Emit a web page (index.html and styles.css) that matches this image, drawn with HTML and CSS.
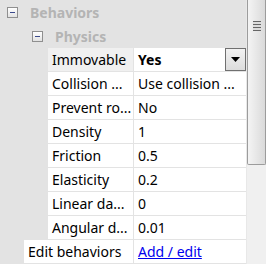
FILE: index.html
```html
<!DOCTYPE html>
<html lang="en">
<head>
  <meta charset="UTF-8" />
  <title>Properties</title>
  <link rel="stylesheet" href="styles.css">
</head>
<body>
  <div class="panel">
    <div class="grid">
      <div class="group">
        <span class="expander"></span>
        <span class="group-title">Behaviors</span>
      </div>
      <div class="group sub">
        <span class="expander"></span>
        <span class="group-title">Physics</span>
      </div>

      <div class="props">
        <div class="name selected">Immovable</div>
        <div class="value combo">
          <b>Yes</b>
          <span class="drop"><svg width="9" height="5" viewBox="0 0 9 5"><path d="M0 0h9L4.5 5z" fill="#000"/></svg></span>
        </div>
        <div class="name">Collision ...</div>
        <div class="value">Use collision ...</div>
        <div class="name">Prevent ro...</div>
        <div class="value">No</div>
        <div class="name">Density</div>
        <div class="value">1</div>
        <div class="name">Friction</div>
        <div class="value">0.5</div>
        <div class="name">Elasticity</div>
        <div class="value">0.2</div>
        <div class="name">Linear da...</div>
        <div class="value">0</div>
        <div class="name">Angular d...</div>
        <div class="value">0.01</div>
      </div>

      <div class="props edit">
        <div class="name">Edit behaviors</div>
        <div class="value"><a href="#">Add / edit</a></div>
      </div>
    </div>

    <div class="scrollbar">
      <div class="thumb">
        <span class="grip"></span>
      </div>
    </div>
  </div>
</body>
</html>
```

FILE: styles.css
```css
body {
  margin: 0;
  font-family: 'Noto Sans', 'Open Sans', sans-serif;
  font-size: 14px;
  background-color: #e3e3e3;
  color: #000;
}

.panel {
  display: flex;
  height: 264px;
  overflow: hidden;
}

.grid {
  width: 247px;
}

.group {
  display: flex;
  align-items: center;
  height: 24px;
  padding-left: 7px;
  gap: 12px;
}

.group.sub {
  padding-left: 32px;
}

.group-title {
  font-weight: bold;
  color: #b4b4b4;
}

.expander {
  position: relative;
  width: 9px;
  height: 9px;
  border: 1px solid #8f8f8f;
  background: linear-gradient(#ffffff, #e2e2e2);
}

.expander::after {
  content: "";
  position: absolute;
  left: 2px;
  top: 4px;
  width: 5px;
  height: 1px;
  background-color: #3b4a8c;
}

.props {
  display: grid;
  grid-template-columns: 85px 112px;
  gap: 1px;
  margin-left: 48px;
}

.props.edit {
  grid-template-columns: 109px 112px;
  margin-left: 24px;
  margin-top: 1px;
}

.name,
.value {
  height: 23px;
  line-height: 23px;
  padding-left: 4px;
  background-color: #fff;
  white-space: nowrap;
  overflow: hidden;
}

.name.selected {
  background-color: #f0f0f0;
}

.combo {
  display: flex;
  justify-content: space-between;
}

.drop {
  display: flex;
  align-items: center;
  justify-content: center;
  width: 19px;
  height: 21px;
  border: 1px solid #707070;
  background: linear-gradient(#f2f2f2, #dcdcdc);
}

a {
  color: #0000ee;
}

.scrollbar {
  width: 19px;
  background-color: #f0f0f0;
  border-left: 1px solid #e8e8e8;
}

.thumb {
  height: 163px;
  border: 1px solid #9c9c9c;
  border-top: none;
  border-radius: 0 0 2px 2px;
  background: linear-gradient(to right, #f4f4f4, #dadada);
  display: flex;
  justify-content: center;
  padding-top: 21px;
  box-sizing: border-box;
  height: 165px;
}

.grip {
  width: 8px;
  height: 10px;
  background: repeating-linear-gradient(#666 0 1px, #dcdcdc 1px 3px);
}
```
